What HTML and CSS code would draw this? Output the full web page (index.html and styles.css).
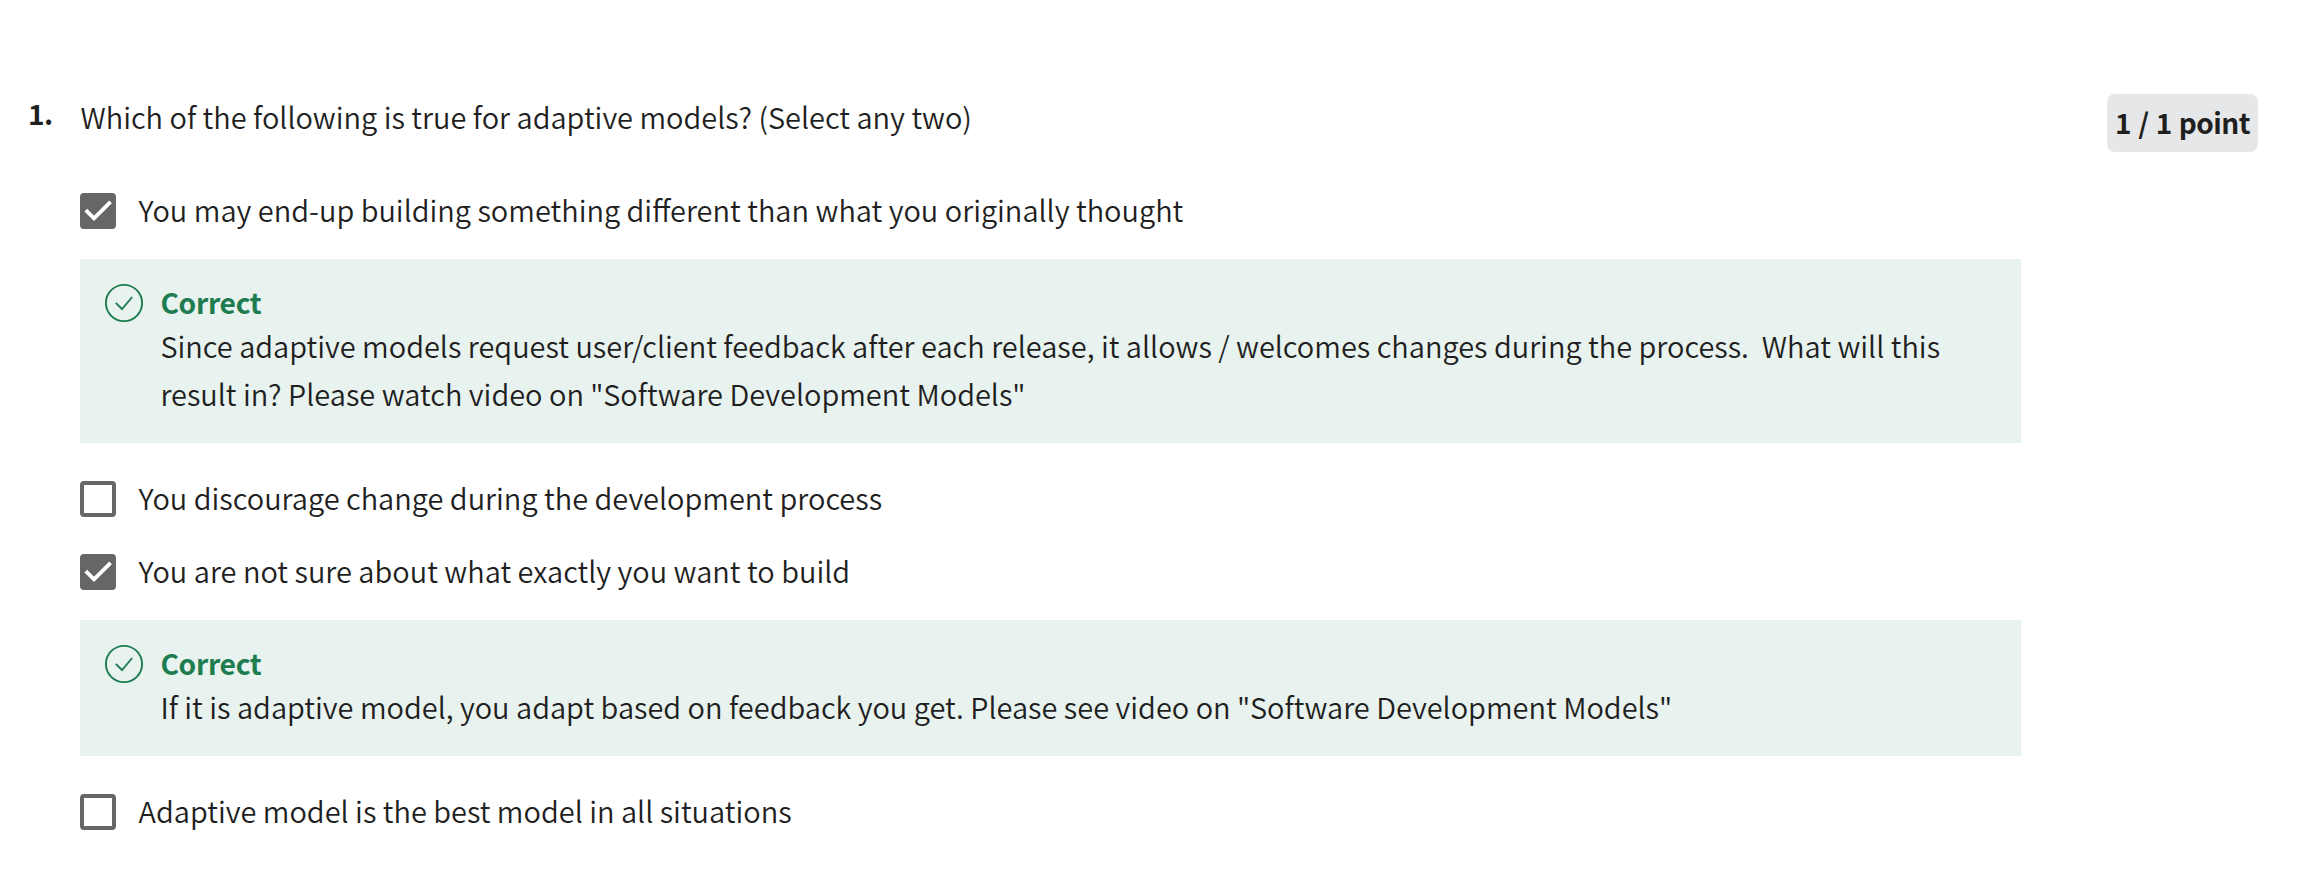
FILE: index.html
```html
<!DOCTYPE html>
<html lang="en">
<head>
<meta charset="utf-8">
<title>Quiz</title>
<link rel="stylesheet" href="styles.css">
</head>
<body>
<main class="question">
  <div class="number">1.</div>
  <section class="content">
    <h1 class="prompt"><span>Which of the following is true for adaptive models? (Select any two)</span></h1>
    <label class="option first"><svg class="box" viewBox="0 0 36 36"><rect width="36" height="36" rx="4" fill="#666"/><path d="M5.800 17.200l8.200 8.200L30.600 8.800" fill="none" stroke="#fff" stroke-width="3.800"/></svg><span>You may end-up building something different than what you originally thought</span></label>
    <div class="feedback tall">
      <svg class="tick" viewBox="0 0 40 40"><circle cx="20" cy="20" r="18.100"/><path d="M11.800 19.800l6.200 6.200L28.200 14"/></svg>
      <div><strong><span>Correct</span></strong><p><span>Since adaptive models request user/client feedback after each release, it allows / welcomes changes during the process.&nbsp; What will this</span><br><span>result in? Please watch video on "Software Development Models"</span></p></div>
    </div>
    <label class="option second"><svg class="box" viewBox="0 0 36 36"><rect x="2" y="2" width="32" height="32" rx="2" fill="#fff" stroke="#666" stroke-width="4"/></svg><span>You discourage change during the development process</span></label>
    <label class="option third"><svg class="box" viewBox="0 0 36 36"><rect width="36" height="36" rx="4" fill="#666"/><path d="M5.800 17.200l8.200 8.200L30.600 8.800" fill="none" stroke="#fff" stroke-width="3.800"/></svg><span>You are not sure about what exactly you want to build</span></label>
    <div class="feedback short">
      <svg class="tick" viewBox="0 0 40 40"><circle cx="20" cy="20" r="18.100"/><path d="M11.800 19.800l6.200 6.200L28.200 14"/></svg>
      <div><strong><span>Correct</span></strong><p><span>If it is adaptive model, you adapt based on feedback you get. Please see video on "Software Development Models"</span></p></div>
    </div>
    <label class="option fourth"><svg class="box" viewBox="0 0 36 36"><rect x="2" y="2" width="32" height="32" rx="2" fill="#fff" stroke="#666" stroke-width="4"/></svg><span>Adaptive model is the best model in all situations</span></label>
  </section>
  <div class="score">1 / 1 point</div>
</main>
</body>
</html>
```

FILE: styles.css
```css
* { box-sizing: border-box; }
body {
  margin: 0;
  background: #fff;
  color: #1f1f1f;
  font: 350 28.96px/48px "Noto Sans CJK SC", "Open Sans", sans-serif;
}
.question { display: flex; align-items: flex-start; padding: 94px 58px 0 28px; height: 871px; }
.number { width: 52px; font-size: 28.2px; font-weight: 600; line-height: 38px; letter-spacing: -0.6px; }
.content { width: 1941px; }
.prompt { margin: 0; padding-left: 0.5px; font: inherit; line-height: 44px; height: 48px; }
.option { display: flex; align-items: flex-start; height: 48px; gap: 22.6px; line-height: 44px; white-space: nowrap; }
.first { margin-top: 45px; }
.second { margin-top: 32px; }
.third { margin-top: 25px; }
.fourth { margin-top: 32px; }
.box { width: 36px; height: 36px; margin-top: 6px; flex: none; }
.feedback { display: flex; gap: 16.4px; margin-top: 24px; padding: 20px 24px; background: #e8f2ee; white-space: nowrap; }
.tall { height: 184px; }
.short { height: 136px; }
.tick { width: 40px; height: 40px; flex: none; margin-top: 4px; fill: none; stroke: #1d7c50; stroke-width: 1.9; }
.feedback strong { display: block; height: 42px; color: #1d7c50; font-size: 28.2px; font-weight: 600; line-height: 46px; letter-spacing: -0.3px; }
.feedback p { margin: 0; }
.score { margin-left: auto; width: 151px; height: 58px; border-radius: 8px; background: #e5e7e8; padding-left: 8px; font-size: 28px; font-weight: 600; line-height: 56px; letter-spacing: -0.55px; word-spacing: 1.4px; white-space: nowrap; }
```
